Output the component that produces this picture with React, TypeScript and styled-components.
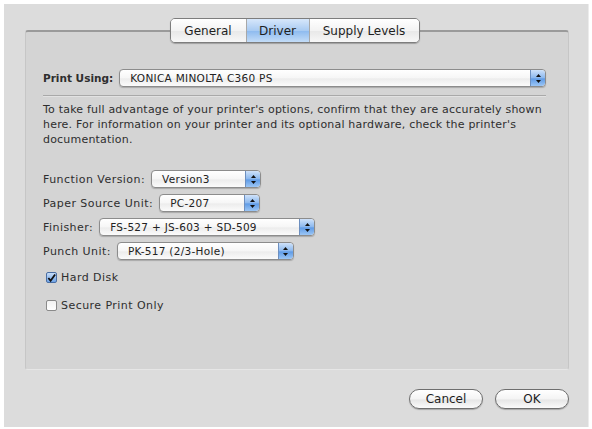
import { createGlobalStyle, styled } from "styled-components";

const GlobalStyle = createGlobalStyle`
  html, body {
    margin: 0;
    background: #ffffff;
  }
  body {
    font-family: "DejaVu Sans", "Liberation Sans", sans-serif;
    color: #2a2a2a;
  }
`;

const Window = styled.div`
  box-sizing: border-box;
  width: 585px;
  height: 423px;
  margin: 4px 0 0 4px;
  background: #dcdcdc;
  border-right: 1px solid #ececec;
  display: flex;
  flex-direction: column;
  padding: 14px 19px 0 21px;
`;

const TabStrip = styled.div`
  align-self: center;
  display: flex;
  height: 23px;
  margin-left: -5px;
  margin-bottom: -13px;
  position: relative;
  z-index: 1;
  border: 1px solid #7d7d7d;
  border-radius: 5px;
  overflow: hidden;
  box-shadow: 0 1px 1px rgba(0, 0, 0, 0.25);
`;

const Tab = styled.div<{ $active?: boolean; $w: number }>`
  width: ${(p) => p.$w}px;
  display: flex;
  align-items: center;
  justify-content: center;
  font-size: 12px;
  color: #1e1e1e;
  background: ${(p) =>
    p.$active
      ? "linear-gradient(#d7e7fb 0%, #a9cbf2 50%, #8dbaef 52%, #c3dcf7 100%)"
      : "linear-gradient(#ffffff 0%, #f3f3f3 50%, #e8e8e8 52%, #f7f7f7 100%)"};
  & + & {
    border-left: 1px solid #a8a8a8;
  }
`;

const GroupBox = styled.div`
  box-sizing: border-box;
  height: 340px;
  background: #d4d4d4;
  border-top: 2px solid #9a9a9a;
  border-left: 1px solid #c6c6c6;
  border-right: 1px solid #c6c6c6;
  border-bottom: 1px solid #e6e6e6;
  border-radius: 3px;
  padding: 37px 22px 0 17px;
  display: flex;
  flex-direction: column;
`;

const Row = styled.div<{ $mt?: number }>`
  display: flex;
  align-items: center;
  margin-top: ${(p) => p.$mt ?? 0}px;
`;

const Label = styled.span<{ $bold?: boolean }>`
  font-size: ${(p) => (p.$bold ? "10.5px" : "11px")};
  letter-spacing: ${(p) => (p.$bold ? "0" : "0.45px")};
  font-weight: ${(p) => (p.$bold ? "bold" : "normal")};
  color: #2e2e2e;
  white-space: nowrap;
  margin-right: 6px;
`;

const PopupBox = styled.div<{ $w?: number }>`
  box-sizing: border-box;
  ${(p) => (p.$w ? `width: ${p.$w}px;` : "flex: 1;")}
  height: 18px;
  border: 1px solid #8c8c8c;
  border-radius: 4px;
  background: linear-gradient(#ffffff 0%, #f6f6f6 50%, #ececec 55%, #fbfbfb 100%);
  box-shadow: 0 1px 1px rgba(0, 0, 0, 0.2);
  display: flex;
  align-items: center;
  padding-left: 10px;
  font-size: 10.5px;
  letter-spacing: 0.3px;
  color: #222;
  overflow: hidden;
`;

const PopupText = styled.span`
  flex: 1;
  white-space: nowrap;
`;

const Stepper = styled.span`
  width: 14px;
  height: 16px;
  border-radius: 0 3px 3px 0;
  background: linear-gradient(#cfe2fa 0%, #8ab7ee 50%, #5f9be6 55%, #9cc6f5 100%);
  border-left: 1px solid #6d8fbf;
  display: flex;
  align-items: center;
  justify-content: center;
`;

const Divider = styled.div`
  height: 1px;
  background: #a9a9a9;
  border-bottom: 1px solid #e2e2e2;
  margin-top: 8px;
`;

const Paragraph = styled.p`
  margin: 5px 0 0;
  font-size: 11px;
  line-height: 15px;
  letter-spacing: 0.2px;
  color: #2e2e2e;
`;

const CheckRow = styled.label<{ $mt: number }>`
  display: flex;
  align-items: center;
  gap: 4px;
  margin-top: ${(p) => p.$mt}px;
  margin-left: 3px;
  font-size: 11px;
  letter-spacing: 0.45px;
  color: #2e2e2e;
`;

const Box = styled.span<{ $checked?: boolean }>`
  box-sizing: border-box;
  width: 11px;
  height: 11px;
  border-radius: 2px;
  border: 1px solid ${(p) => (p.$checked ? "#4a6ea3" : "#8a8a8a")};
  background: ${(p) =>
    p.$checked
      ? "linear-gradient(#c7ddf8, #6fa4e8)"
      : "linear-gradient(#f2f2f2, #ffffff)"};
  display: flex;
  align-items: center;
  justify-content: center;
`;

const Footer = styled.div`
  display: flex;
  justify-content: flex-end;
  gap: 12px;
  margin-top: 19px;
`;

const Button = styled.button`
  box-sizing: border-box;
  width: 74px;
  height: 20px;
  border: 1px solid #6e6e6e;
  border-radius: 10px;
  background: linear-gradient(#ffffff 0%, #f4f4f4 50%, #e6e6e6 55%, #fafafa 100%);
  box-shadow: 0 1px 1px rgba(0, 0, 0, 0.25);
  font-family: "DejaVu Sans", sans-serif;
  font-size: 12px;
  color: #1e1e1e;
  padding: 0;
`;

const Arrows = () => (
  <svg width="7" height="11" viewBox="0 0 7 11">
    <path d="M3.5 1 L6 4 L1 4 Z" fill="#111" />
    <path d="M3.5 10 L6 7 L1 7 Z" fill="#111" />
  </svg>
);

const Check = () => (
  <svg width="10" height="10" viewBox="0 0 10 10">
    <path d="M1.5 5 L4 8 L9 1" fill="none" stroke="#111" strokeWidth="2" />
  </svg>
);

const Popup = ({ value, width }: { value: string; width?: number }) => (
  <PopupBox $w={width}>
    <PopupText>{value}</PopupText>
    <Stepper>
      <Arrows />
    </Stepper>
  </PopupBox>
);

const options = [
  { label: "Function Version:", value: "Version3", width: 110, mt: 23 },
  { label: "Paper Source Unit:", value: "PC-207", width: 101, mt: 6 },
  { label: "Finisher:", value: "FS-527 + JS-603 + SD-509", width: 216, mt: 6 },
  { label: "Punch Unit:", value: "PK-517 (2/3-Hole)", width: 177, mt: 6 },
];

export default function App() {
  return (
    <>
      <GlobalStyle />
      <Window>
        <TabStrip>
          <Tab $w={75}>General</Tab>
          <Tab $w={62} $active>
            Driver
          </Tab>
          <Tab $w={109}>Supply Levels</Tab>
        </TabStrip>
        <GroupBox>
          <Row>
            <Label $bold>Print Using:</Label>
            <Popup value="KONICA MINOLTA C360 PS" />
          </Row>
          <Divider />
          <Paragraph>
            To take full advantage of your printer's options, confirm that they
            are accurately shown here. For information on your printer and its
            optional hardware, check the printer's documentation.
          </Paragraph>
          {options.map((o) => (
            <Row key={o.label} $mt={o.mt}>
              <Label>{o.label}</Label>
              <Popup value={o.value} width={o.width} />
            </Row>
          ))}
          <CheckRow $mt={11}>
            <Box $checked>
              <Check />
            </Box>
            Hard Disk
          </CheckRow>
          <CheckRow $mt={15}>
            <Box />
            Secure Print Only
          </CheckRow>
        </GroupBox>
        <Footer>
          <Button>Cancel</Button>
          <Button>OK</Button>
        </Footer>
      </Window>
    </>
  );
}
